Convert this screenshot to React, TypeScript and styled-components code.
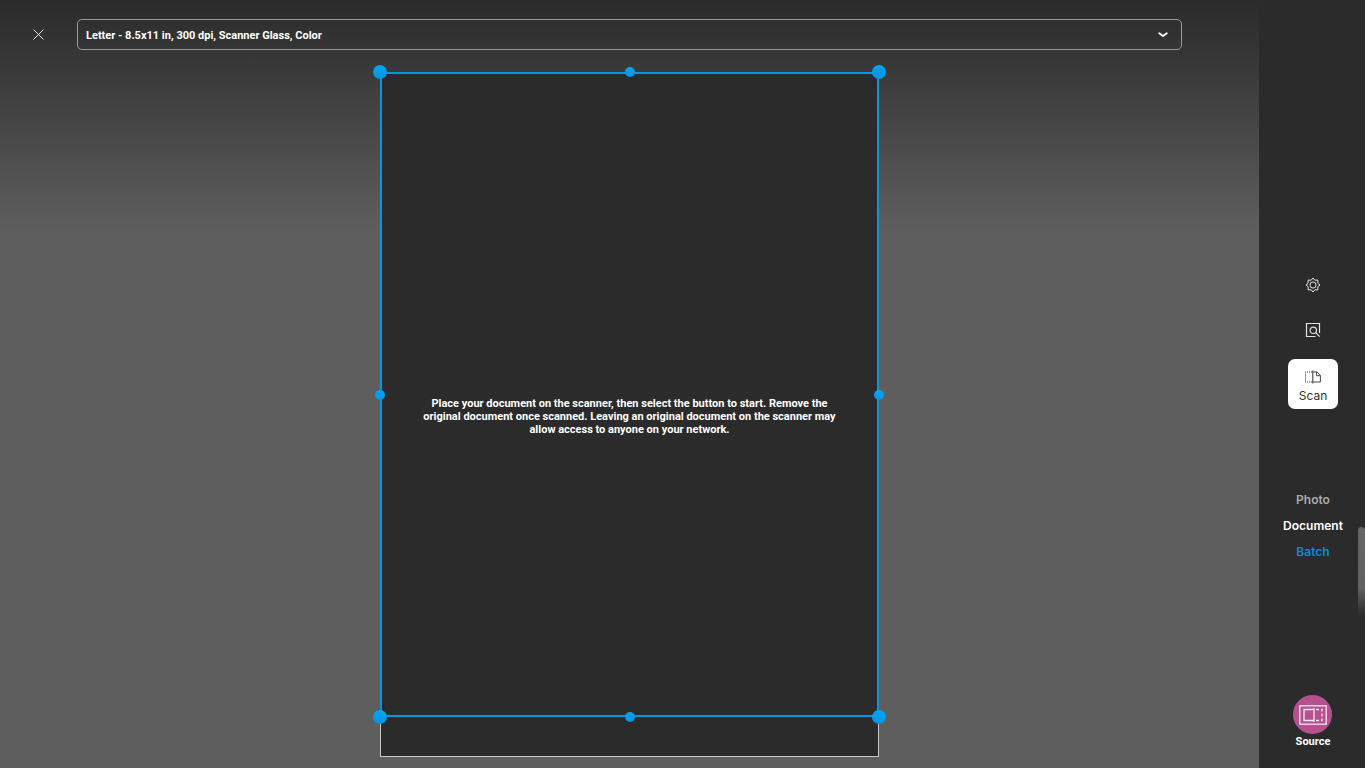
import React, { useState } from "react";
import styled, { createGlobalStyle } from "styled-components";

const GlobalStyle = createGlobalStyle`
  * { box-sizing: border-box; }
  body {
    margin: 0;
    background: #2b2b2b;
    color: #fff;
    font-family: Inter, "Liberation Sans", sans-serif;
    font-variant-ligatures: no-contextual;
  }
  button, select { font-family: inherit; font-variant-ligatures: inherit; }
`;

const Screen = styled.div`
  display: grid;
  grid-template-columns: minmax(0, 1fr) 106px;
  height: 100vh;
  min-height: 560px;
`;

const Workspace = styled.main`
  display: flex;
  flex-direction: column;
  min-height: 0;
  background: linear-gradient(#2b2b2b 0, #333 40px, #5e5e5e 230px);
`;

const TopBar = styled.header`
  display: flex;
  align-items: center;
  padding: 19px 77px 0 0;
`;

const IconButton = styled.button<{ $width?: number }>`
  display: flex;
  align-items: center;
  justify-content: center;
  width: ${(p) => p.$width ?? 32}px;
  height: 31px;
  padding: 0;
  border: 0;
  background: none;
  color: #e4e4e4;
`;

const PresetField = styled.div`
  position: relative;
  flex: 1;
  height: 31px;
`;

const PresetSelect = styled.select`
  display: block;
  width: 100%;
  height: 100%;
  padding: 1px 32px 0 8px;
  appearance: none;
  border: 1px solid #9b9b9b;
  border-radius: 5px;
  background: transparent;
  color: #fff;
  font-family: Roboto, "Liberation Sans", sans-serif;
  font-size: 11px;
  font-weight: 700;
`;

const Chevron = styled.svg`
  position: absolute;
  top: 12px;
  right: 13px;
  pointer-events: none;
`;

const Stage = styled.section`
  display: flex;
  justify-content: center;
  flex: 1;
  min-height: 0;
  padding: 22px 0 11px;
`;

const ScanBed = styled.div`
  position: relative;
  display: flex;
  align-items: center;
  justify-content: center;
  height: 100%;
  aspect-ratio: 499 / 685;
  padding: 4px 32px 0;
  border: 1px solid #c8c8c8;
  background: #2b2b2b;
`;

const Prompt = styled.p`
  margin: 0;
  font-family: Roboto, "Liberation Sans", sans-serif;
  font-size: 11px;
  line-height: 13px;
  font-weight: 700;
  text-align: center;
`;

const CropFrame = styled.div`
  position: absolute;
  top: -1px;
  left: -1px;
  right: -1px;
  height: 94.5%;
  box-shadow: inset 0 0 0 2px #0797e2;
`;

const Handle = styled.span<{ $x: number; $y: number; $size: number }>`
  position: absolute;
  left: ${(p) => p.$x}%;
  top: ${(p) => p.$y}%;
  width: ${(p) => p.$size}px;
  height: ${(p) => p.$size}px;
  border-radius: 50%;
  background: linear-gradient(#04a4f4, #0494e0);
  transform: translate(-50%, -50%);
`;

const SidePanel = styled.aside`
  position: relative;
  display: grid;
  grid-template-rows: 1fr auto 1fr;
  justify-items: center;
  padding-left: 2px;
  background: #2b2b2b;
`;

const Tools = styled.div`
  display: flex;
  flex-direction: column;
  justify-content: flex-end;
  gap: 14px;
  padding-bottom: 14px;
`;

const ScanButton = styled.button`
  display: flex;
  flex-direction: column;
  align-items: center;
  justify-content: center;
  gap: 4px;
  width: 50px;
  height: 50px;
  padding: 6px 0 0;
  border: 0;
  border-radius: 7px;
  background: #fff;
  color: #333;
  font-size: 12px;
  line-height: 16px;
`;

const LowerPanel = styled.div`
  display: flex;
  flex-direction: column;
  align-items: center;
  justify-content: space-between;
  padding: 77px 0 18px;
`;

const Modes = styled.nav`
  display: flex;
  flex-direction: column;
`;

const ModeButton = styled.button<{ $color: string }>`
  height: 26px;
  padding: 0;
  border: 0;
  background: none;
  color: ${(p) => p.$color};
  font-size: 12px;
  font-weight: 600;
`;

const SourceButton = styled.button`
  display: flex;
  flex-direction: column;
  align-items: center;
  padding: 0;
  border: 0;
  background: none;
  color: #fff;
  font-family: Roboto, "Liberation Sans", sans-serif;
  font-size: 11px;
  line-height: 16px;
  font-weight: 700;
`;

const SourceBadge = styled.span`
  display: flex;
  align-items: center;
  justify-content: center;
  width: 39px;
  height: 39px;
  border-radius: 50%;
  background: #b5518f;
`;

const ScrollThumb = styled.div`
  position: absolute;
  right: 0;
  top: 527px;
  width: 7px;
  height: 88px;
  border-radius: 4px 4px 0 0;
  background: linear-gradient(#666 0, #606060 70%, #2b2b2b 100%);
`;

const CloseIcon = () => (
  <svg width="11" height="11" viewBox="0 0 11 11" fill="none" stroke="currentColor">
    <path d="M.5 .5 10.5 10.5M10.5 .5 .5 10.5" />
  </svg>
);

const GearIcon = () => (
  <svg width="16" height="16" viewBox="0 0 16 16" fill="none" stroke="currentColor" strokeLinejoin="round">
    <path d="M8 1 9.8 3.2 12.9 3.1 12.8 6.2 15 8 12.8 9.8 12.9 12.9 9.8 12.8 8 15 6.2 12.8 3.1 12.9 3.2 9.8 1 8 3.2 6.2 3.1 3.1 6.2 3.2Z" />
    <circle cx="8" cy="8" r="3.1" />
  </svg>
);

const PreviewIcon = () => (
  <svg width="16" height="16" viewBox="0 0 16 16" fill="none" stroke="currentColor" strokeWidth="1.2">
    <path d="M10.5 14.5H1.5V1.5H14.5V11" />
    <circle cx="8.3" cy="8.3" r="3.2" />
    <path d="m10.7 10.7 4 4" />
  </svg>
);

const ScanIcon = () => (
  <svg width="16" height="14" viewBox="0 0 16 14" fill="none" stroke="currentColor">
    <path d="M7 2H.5v10H7" strokeDasharray="1 1" />
    <path d="M7.8 .5v13" />
    <path d="M8 2h4l3.4 3.4V12H8M11.6 2v3.7h3.8" strokeWidth=".9" />
  </svg>
);

const SourceIcon = () => (
  <svg width="28" height="20" viewBox="0 0 28 20" fill="none" stroke="#f8e6f1" strokeWidth="1.3">
    <rect x=".8" y=".8" width="26.4" height="18.4" />
    <path d="M15 4.5H5v11h10M15 3v14" />
    <path d="M17 4.5h6v11h-6" strokeDasharray="3 2" />
  </svg>
);

const handles = [
  { x: 0, y: 0, size: 14 },
  { x: 50, y: 0, size: 10 },
  { x: 100, y: 0, size: 14 },
  { x: 0, y: 50, size: 10 },
  { x: 100, y: 50, size: 10 },
  { x: 0, y: 100, size: 14 },
  { x: 50, y: 100, size: 10 },
  { x: 100, y: 100, size: 14 },
];

const modes = [
  { name: "Photo", color: "#aaa" },
  { name: "Document", color: "#fff" },
  { name: "Batch", color: "#078ed4" },
];

export default function App() {
  const [preset, setPreset] = useState("letter");
  return (
    <Screen>
      <GlobalStyle />
      <Workspace>
        <TopBar>
          <IconButton $width={77} aria-label="Close">
            <CloseIcon />
          </IconButton>
          <PresetField>
            <PresetSelect
              aria-label="Scan preset"
              value={preset}
              onChange={(e) => setPreset(e.target.value)}
            >
              <option value="letter">Letter - 8.5x11 in, 300 dpi, Scanner Glass, Color</option>
            </PresetSelect>
            <Chevron width="12" height="8" viewBox="0 0 12 8" fill="none" stroke="#fff" strokeWidth="1.8">
              <path d="M2.2 2.2 6 5l3.8-2.8" strokeLinecap="round" strokeLinejoin="round" />
            </Chevron>
          </PresetField>
        </TopBar>
        <Stage>
          <ScanBed>
            <Prompt>
              Place your document on the scanner, then select the button to start. Remove the original
              document once scanned. Leaving an original document on the scanner may allow access to
              anyone on your network.
            </Prompt>
            <CropFrame>
              {handles.map((h) => (
                <Handle key={`${h.x}-${h.y}`} $x={h.x} $y={h.y} $size={h.size} />
              ))}
            </CropFrame>
          </ScanBed>
        </Stage>
      </Workspace>
      <SidePanel>
        <Tools>
          <IconButton aria-label="Settings">
            <GearIcon />
          </IconButton>
          <IconButton aria-label="Preview">
            <PreviewIcon />
          </IconButton>
        </Tools>
        <ScanButton>
          <ScanIcon />
          Scan
        </ScanButton>
        <LowerPanel>
          <Modes aria-label="Scan mode">
            {modes.map((m) => (
              <ModeButton key={m.name} $color={m.color}>
                {m.name}
              </ModeButton>
            ))}
          </Modes>
          <SourceButton>
            <SourceBadge>
              <SourceIcon />
            </SourceBadge>
            Source
          </SourceButton>
        </LowerPanel>
        <ScrollThumb />
      </SidePanel>
    </Screen>
  );
}
